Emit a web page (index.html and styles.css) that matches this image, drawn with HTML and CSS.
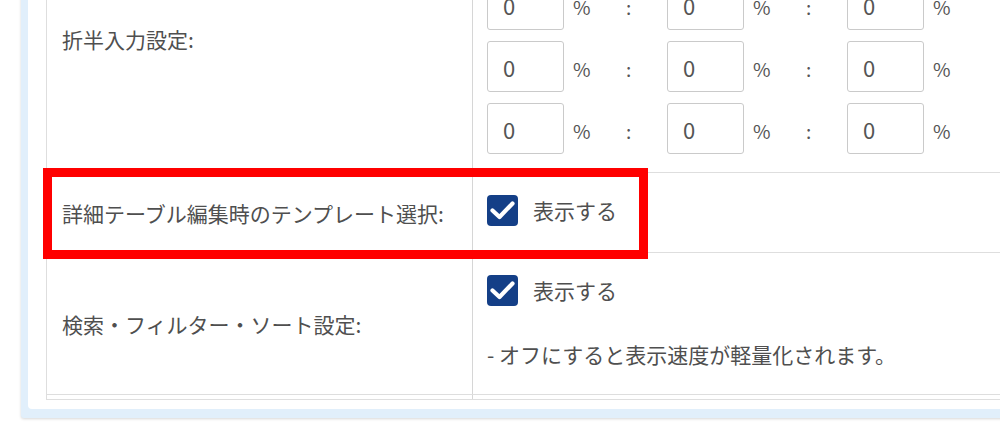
FILE: index.html
```html
<!DOCTYPE html>
<html lang="ja">
<head>
<meta charset="utf-8">
<title>設定</title>
<link rel="stylesheet" href="styles.css">
</head>
<body>
<div class="frame">
  <div class="panel">
    <table class="settings">
      <colgroup><col class="col-label"><col></colgroup>
      <tr class="row-ratio">
        <th>折半入力設定:</th>
        <td>
          <div class="ratios">
            <div class="ratio-row">
              <input class="num" type="text" value="0"><span class="pct">%</span><span class="colon">:</span>
              <input class="num" type="text" value="0"><span class="pct">%</span><span class="colon">:</span>
              <input class="num" type="text" value="0"><span class="pct">%</span>
            </div>
            <div class="ratio-row">
              <input class="num" type="text" value="0"><span class="pct">%</span><span class="colon">:</span>
              <input class="num" type="text" value="0"><span class="pct">%</span><span class="colon">:</span>
              <input class="num" type="text" value="0"><span class="pct">%</span>
            </div>
            <div class="ratio-row">
              <input class="num" type="text" value="0"><span class="pct">%</span><span class="colon">:</span>
              <input class="num" type="text" value="0"><span class="pct">%</span><span class="colon">:</span>
              <input class="num" type="text" value="0"><span class="pct">%</span>
            </div>
            <div class="ratio-row">
              <input class="num" type="text" value="0"><span class="pct">%</span><span class="colon">:</span>
              <input class="num" type="text" value="0"><span class="pct">%</span><span class="colon">:</span>
              <input class="num" type="text" value="0"><span class="pct">%</span>
            </div>
          </div>
        </td>
      </tr>
      <tr class="row-template">
        <th>詳細テーブル編集時のテンプレート選択:</th>
        <td>
          <label class="chk">
            <span class="box"><svg viewBox="0 0 31 31" width="31" height="31"><path d="M5.5 15.5 L12.5 22 L25.5 8.5" fill="none" stroke="#fff" stroke-width="4.2" stroke-linecap="round" stroke-linejoin="round"/></svg></span>
            <span class="chk-text">表示する</span>
          </label>
        </td>
      </tr>
      <tr class="row-filter">
        <th>検索・フィルター・ソート設定:</th>
        <td>
          <label class="chk">
            <span class="box"><svg viewBox="0 0 31 31" width="31" height="31"><path d="M5.5 15.5 L12.5 22 L25.5 8.5" fill="none" stroke="#fff" stroke-width="4.2" stroke-linecap="round" stroke-linejoin="round"/></svg></span>
            <span class="chk-text">表示する</span>
          </label>
          <p class="note">- オフにすると表示速度が軽量化されます。</p>
        </td>
      </tr>
      <tr class="row-spacer"><th></th><td></td></tr>
    </table>
  </div>
  <div class="highlight"></div>
</div>
</body>
</html>
```

FILE: styles.css
```css
html, body {
  margin: 0;
  padding: 0;
  background: #ffffff;
  overflow: hidden;
}

body {
  font-family: "Noto Sans CJK JP", "Noto Sans", sans-serif;
  color: #4f4f4f;
  width: 1000px;
  height: 447px;
}

.frame {
  position: relative;
  width: 1100px;
  margin: -127px 0 0 21px;
  padding: 7px 7px 9px 7px;
  background: #e1effb;
  border-radius: 3px;
  box-shadow: 0 1px 3px rgba(0, 0, 0, 0.16);
}

.panel {
  background: #ffffff;
  border-radius: 4px;
  padding: 18px 18px 9px 18px;
}

.settings {
  width: 100%;
  table-layout: fixed;
  border-collapse: collapse;
  border: 1px solid #dedede;
}

.col-label {
  width: 426px;
}

.settings th,
.settings td {
  border: 1px solid #dedede;
  vertical-align: middle;
  font-size: 21px;
  line-height: 30px;
}

.settings th {
  text-align: left;
  font-weight: normal;
  padding: 0 15px;
  border-right-color: #d6d6d6;
}

.settings td {
  padding: 0 14px;
}

.row-ratio th {
  padding-top: 25px;
  padding-bottom: 18px;
}

.row-ratio td {
  padding-top: 18px;
  padding-bottom: 18px;
}

.ratios {
  display: flex;
  flex-direction: column;
  gap: 11px;
}

.ratio-row {
  display: flex;
  align-items: baseline;
}

.num {
  box-sizing: border-box;
  width: 77px;
  height: 51px;
  margin: 0;
  padding: 0 0 0 15px;
  border: 1px solid #cacaca;
  border-radius: 3px;
  background: #fff;
  font-family: "Noto Sans CJK JP", "Noto Sans", sans-serif;
  font-size: 22px;
  color: #555555;
  outline: none;
}

.pct {
  width: 22px;
  margin-left: 9px;
  font-size: 19px;
  color: #555555;
}

.colon {
  width: 6px;
  margin-left: 31px;
  margin-right: 35px;
  font-size: 19px;
  color: #555555;
}

.row-template td {
  padding-top: 22px;
  padding-bottom: 26px;
}

.row-filter td {
  padding-top: 22px;
  padding-bottom: 25px;
}

.chk {
  display: flex;
  align-items: center;
  height: 31px;
}

.box {
  display: block;
  width: 31px;
  height: 31px;
  border-radius: 4px;
  background: #143f87;
}

.box svg {
  display: block;
}

.chk-text {
  margin-left: 15px;
  line-height: 31px;
}

.note {
  margin: 33px 0 0 0;
  line-height: 30px;
}

.row-spacer th,
.row-spacer td {
  height: 4px;
  padding: 0;
  line-height: 0;
}

.highlight {
  position: absolute;
  left: 22px;
  top: 295px;
  width: 587px;
  height: 73px;
  border: 9px solid #ff0000;
}
```
